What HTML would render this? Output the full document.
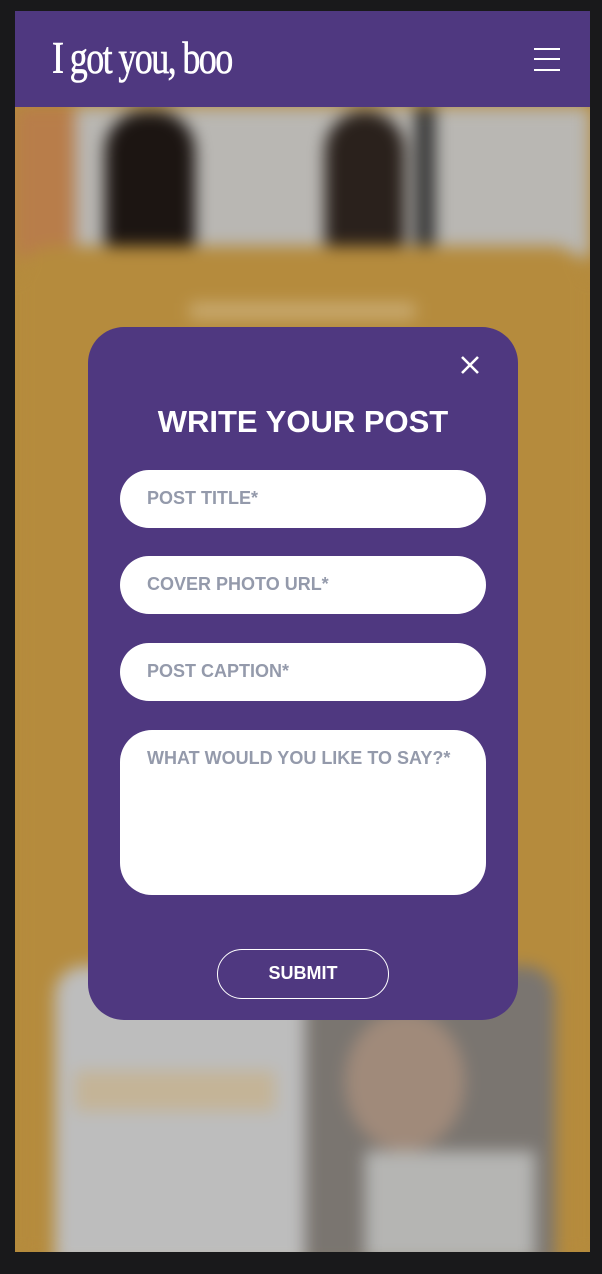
<!DOCTYPE html>
<html><head><style>
*{margin:0;padding:0;box-sizing:border-box}
body{width:602px;height:1274px;background:#19191b;position:relative;overflow:hidden;font-family:"Liberation Sans",sans-serif}
#frame{position:absolute;left:15px;top:11px;width:575px;height:1241px;overflow:hidden;background:#b58b3d}
#hdr{position:absolute;left:0;top:0;width:575px;height:96px;background:#4f3880;z-index:3}
#logo{position:absolute;left:37px;top:21px;color:#fff;font-family:"Liberation Serif",serif;font-size:45px;letter-spacing:-2px;transform:scaleX(.8);transform-origin:left;-webkit-text-stroke:.6px #fff;white-space:nowrap}
.bar{position:absolute;left:519px;width:26px;height:2px;background:#fff}
#bg{position:absolute;inset:0;filter:blur(8px)}
.m{position:absolute}
#modal{position:absolute;width:430px;height:693px;background:#4f3880;border-radius:36px;z-index:4}
h2{position:absolute;top:77px;width:100%;text-align:center;color:#fff;font-size:31px;font-weight:bold;letter-spacing:0}
.in{position:absolute;left:32px;width:366px;height:58px;background:#fff;border-radius:29px;color:#949aab;font-weight:bold;font-size:18px;padding:18px 0 0 27px}
#sub{position:absolute;left:129px;top:622px;width:172px;height:50px;border:1.5px solid #fff;border-radius:25px;color:#fff;font-weight:bold;font-size:18px;text-align:center;line-height:47px}
</style></head><body>
<div id="frame">
<div id="bg">
 <div class="m" style="left:0;top:96px;width:575px;height:150px;background:#b9b7b3"></div>
 <div class="m" style="left:0;top:96px;width:60px;height:150px;background:#b87d4a"></div>
 <div class="m" style="left:90px;top:100px;width:90px;height:140px;background:#1c1512;border-radius:40px 40px 0 0"></div>
 <div class="m" style="left:310px;top:100px;width:80px;height:140px;background:#2a211c;border-radius:40px 40px 0 0"></div>
 <div class="m" style="left:400px;top:96px;width:20px;height:140px;background:#333"></div>
 <div class="m" style="left:0;top:235px;width:575px;height:1010px;background:#b58b3d;border-radius:40px 40px 0 0"></div>
 <div class="m" style="left:175px;top:292px;width:225px;height:16px;background:#c9ab72"></div>
 <div class="m" style="left:40px;top:955px;width:500px;height:300px;background:#bdbdbd;border-radius:30px 30px 0 0"></div>
 <div class="m" style="left:290px;top:955px;width:250px;height:300px;background:#7a7570;border-radius:0 30px 0 0"></div>
 <div class="m" style="left:330px;top:1000px;width:120px;height:140px;background:#a08a7a;border-radius:50%"></div>
 <div class="m" style="left:350px;top:1140px;width:170px;height:110px;background:#b5b5b3"></div>
 <div class="m" style="left:60px;top:1060px;width:200px;height:40px;background:#c4b497"></div>
</div>
<div id="hdr"><div id="logo">I got you, boo</div>
<div class="bar" style="top:37px"></div><div class="bar" style="top:47px"></div><div class="bar" style="top:58px"></div></div>
</div>
<div id="modal" style="left:88px;top:327px">
 <svg style="position:absolute;left:372px;top:28px" width="20" height="20"><path d="M2 2L18 18M18 2L2 18" stroke="#fff" stroke-width="2.6"/></svg>
 <h2>WRITE YOUR POST</h2>
 <div class="in" style="top:143px">POST TITLE*</div>
 <div class="in" style="top:229px">COVER PHOTO URL*</div>
 <div class="in" style="top:316px">POST CAPTION*</div>
 <div class="in" style="top:403px;height:165px;border-radius:32px">WHAT WOULD YOU LIKE TO SAY?*</div>
 <div id="sub">SUBMIT</div>
</div>
</body></html>
